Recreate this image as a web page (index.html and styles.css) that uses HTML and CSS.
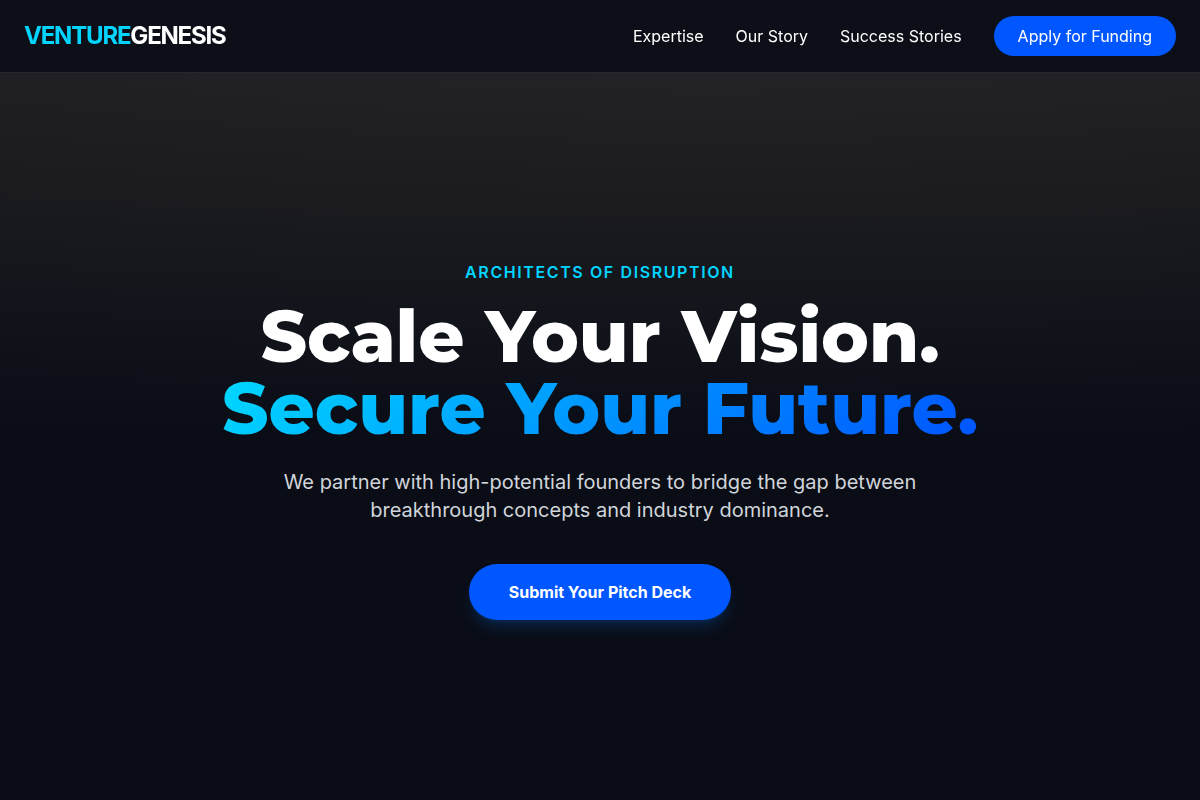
FILE: index.html
```html
<!DOCTYPE html>
<html lang="en">
<head>
<meta charset="utf-8">
<meta name="viewport" content="width=device-width, initial-scale=1">
<title>VentureGenesis</title>
<link rel="stylesheet" href="styles.css">
</head>
<body>
<header class="site-header">
  <a class="logo" href="#"><span class="logo-accent">VENTURE</span>GENESIS</a>
  <nav class="nav" aria-label="Main">
    <a class="nav-link" href="#expertise">Expertise</a>
    <a class="nav-link" href="#story">Our Story</a>
    <a class="nav-link" href="#success">Success Stories</a>
    <a class="nav-link nav-cta" href="#apply">Apply for Funding</a>
  </nav>
</header>
<main class="hero">
  <p class="eyebrow">Architects of Disruption</p>
  <h1 class="title">Scale Your Vision.<br><span class="title-gradient">Secure Your Future.</span></h1>
  <p class="lead">We partner with high-potential founders to bridge the gap between breakthrough concepts and industry dominance.</p>
  <button class="submit" type="button">Submit Your Pitch Deck</button>
</main>
</body>
</html>
```

FILE: styles.css
```css
* {
  box-sizing: border-box;
}

body {
  margin: 0;
  background: #0a0d16;
  color: #fff;
  font-family: Inter, "Liberation Sans", sans-serif;
  font-size: 16px;
  line-height: 24px;
}

.site-header {
  position: fixed;
  top: 0;
  left: 0;
  right: 0;
  display: flex;
  align-items: center;
  justify-content: space-between;
  padding: 16px 24px;
  background: rgba(10, 13, 22, 0.9);
  border-bottom: 1px solid rgba(255, 255, 255, 0.1);
}

.logo {
  color: #fff;
  font-size: 24px;
  font-weight: 700;
  line-height: 32px;
  letter-spacing: -0.05em;
  text-decoration: none;
}

.logo-accent {
  color: #00d4ff;
}

.nav {
  display: flex;
  align-items: center;
  gap: 32px;
}

.nav-link {
  color: #fff;
  text-decoration: none;
}

.nav-cta {
  padding: 8px 24px;
  border-radius: 999px;
  background: #0057ff;
}

.hero {
  display: flex;
  flex-direction: column;
  align-items: center;
  justify-content: center;
  min-height: 100vh;
  padding: 80px 24px 0;
  text-align: center;
  background: radial-gradient(ellipse 260% 54% at 60% 0, #27262b 0%, #1c1c20 45%, #12151b 72%, #0a0d16 100%);
}

.eyebrow {
  margin: 0 0 16px;
  color: #00d4ff;
  font-weight: 600;
  letter-spacing: 0.1em;
  text-transform: uppercase;
}

.title {
  margin: 0 0 24px;
  font-family: Montserrat, Inter, sans-serif;
  font-size: 72px;
  font-weight: 800;
  line-height: 72px;
}

.title-gradient {
  background: linear-gradient(135deg, #00d4ff 4%, #0057ff 96%);
  -webkit-background-clip: text;
  background-clip: text;
  color: transparent;
}

.lead {
  max-width: 672px;
  margin: 0 0 40px;
  color: #d1d5db;
  font-size: 20px;
  line-height: 28px;
}

.submit {
  padding: 16px 40px;
  border: 0;
  border-radius: 999px;
  background: #0057ff;
  box-shadow: 0 10px 15px -3px rgba(0, 120, 255, 0.2), 0 4px 6px -4px rgba(0, 120, 255, 0.2);
  color: #fff;
  font: inherit;
  font-weight: 700;
}
```
